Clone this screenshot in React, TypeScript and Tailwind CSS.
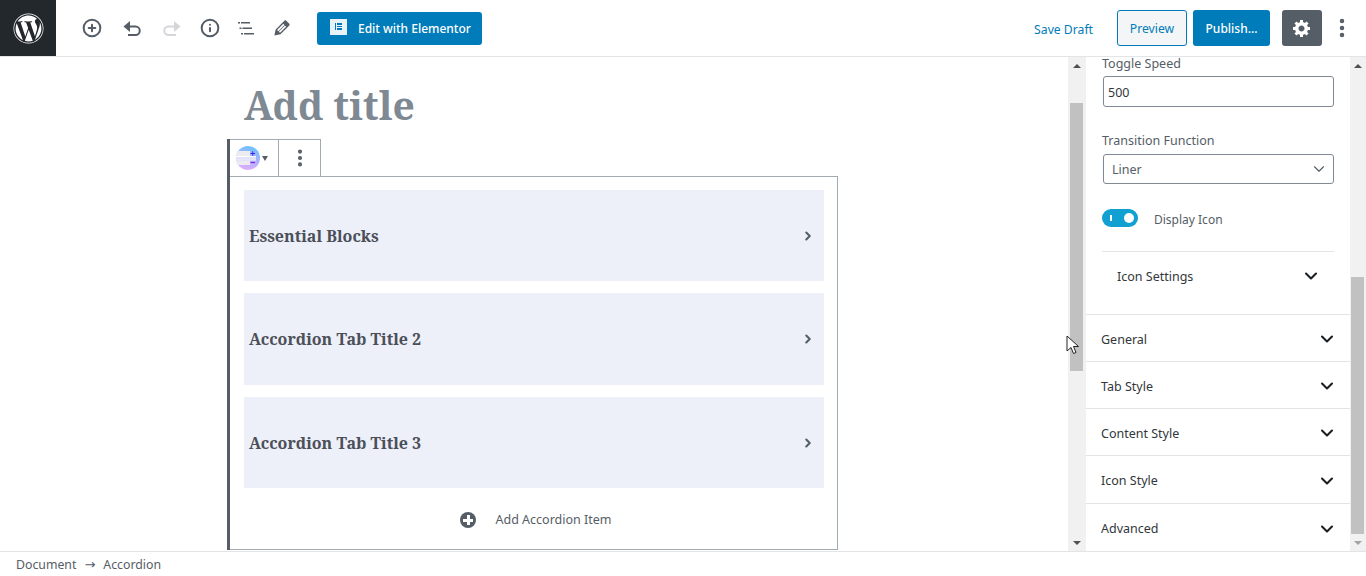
import { ChevronDown, ChevronRight, Info, MoreVertical, PlusCircle } from 'lucide-react'
import { FaWordpress } from 'react-icons/fa'

const sans = "font-['Noto_Sans','Open_Sans',sans-serif]"
const serif = "font-['Noto_Serif','DejaVu_Serif',serif]"

function ListIcon() {
  return (
    <svg viewBox="0 0 16 13" className="w-[16px] h-[13px]" fill="#555d66">
      <rect x="0" y="0" width="2" height="1.500" />
      <rect x="3" y="0" width="9" height="1.500" />
      <rect x="1.500" y="5.500" width="2" height="1.500" />
      <rect x="4.500" y="5.500" width="9.500" height="1.500" />
      <rect x="3" y="11" width="2" height="1.500" />
      <rect x="6" y="11" width="10" height="1.500" />
    </svg>
  )
}

function UndoIcon({ className }: { className?: string }) {
  return (
    <svg viewBox="0 0 18 17" className={`w-[18px] h-[17px] ${className ?? ''}`} fill="none" stroke="currentColor">
      <path d="M0.500 6.500L7 1V12z" fill="currentColor" stroke="none" />
      <path d="M6 6.500H12.500a4.250 4.250 0 0 1 0 8.500H5" strokeWidth="2" />
    </svg>
  )
}

function PencilIcon() {
  return (
    <svg viewBox="0 0 20 20" className="w-[22px] h-[22px]" fill="currentColor">
      <path d="M13.890 3.390l2.710 2.720c.46.46.42 1.240.03 1.640l-8.010 8.020-5.560 1.160 1.160-5.580s7.600-7.630 7.990-8.030c.39-.39 1.220-.39 1.680.07zm-2.730 2.790l-5.590 5.610 1.110 1.110 5.540-5.650zm-2.970 8.230l5.580-5.600-1.070-1.080-5.590 5.600z" />
    </svg>
  )
}

function GearIcon() {
  return (
    <svg viewBox="0 0 20 20" className="w-[20px] h-[20px]" fill="#fff">
      <path d="M18 12h-2.180c-.17.7-.44 1.350-.81 1.930l1.540 1.540-2.100 2.100-1.540-1.540c-.58.36-1.230.63-1.910.79V19H8v-2.180c-.68-.16-1.330-.43-1.910-.79l-1.540 1.540-2.120-2.120 1.540-1.540c-.36-.58-.63-1.230-.79-1.910H1V9.030h2.170c.16-.7.440-1.360.810-1.940L2.430 5.550l2.120-2.120 1.540 1.540c.58-.37 1.240-.64 1.940-.81V2h3v2.180c.68.16 1.330.43 1.910.79l1.540-1.540 2.120 2.120-1.540 1.540c.36.59.64 1.240.8 1.940H18V12zm-8.500 1.500c1.660 0 3-1.340 3-3s-1.340-3-3-3-3 1.340-3 3 1.340 3 3 3z" />
    </svg>
  )
}

function BlockIcon() {
  return (
    <svg viewBox="0 0 24 24" className="w-[24px] h-[24px]">
      <defs>
        <linearGradient id="blk" x1="0.7" y1="0" x2="0.4" y2="1">
          <stop offset="0" stopColor="#66c6ff" />
          <stop offset="0.5" stopColor="#a9b0fc" />
          <stop offset="1" stopColor="#e0aefc" />
        </linearGradient>
        <clipPath id="blkc">
          <circle cx="12" cy="12" r="12" />
        </clipPath>
      </defs>
      <circle cx="12" cy="12" r="12" fill="url(#blk)" />
      <g clipPath="url(#blkc)">
        <rect x="0" y="5" width="14" height="5" fill="#ececf0" />
        <rect x="0" y="10" width="20" height="1" fill="#fff" />
        <rect x="0" y="11" width="20" height="2.500" fill="#e2e2f6" />
        <rect x="0" y="13.500" width="20" height="1" fill="#fff" />
        <rect x="0" y="14.500" width="14" height="4.500" fill="#ececf0" />
      </g>
      <path d="M14.500 7.500h4.500M16.750 5.250v4.500" stroke="#4b22e0" strokeWidth="1" />
      <path d="M14.500 16.500h4.500" stroke="#8a22e0" strokeWidth="1.200" />
    </svg>
  )
}

function ElementorIcon() {
  return (
    <div className="w-[17px] h-[16px] bg-[#e8f2f8] flex items-center justify-center gap-[1px] mb-[3px]">
      <div className="w-[1.500px] h-[7px] bg-[#007cba]" />
      <div className="flex flex-col gap-[1px]">
        <div className="w-[5px] h-[1.500px] bg-[#007cba]" />
        <div className="w-[5px] h-[1.500px] bg-[#007cba]" />
        <div className="w-[5px] h-[1.500px] bg-[#007cba]" />
      </div>
    </div>
  )
}

function TopBar() {
  return (
    <div className="h-[57px] shrink-0 flex items-center border-b border-[#e2e4e7] bg-white">
      <div className="w-[56px] h-[56px] bg-[#23282d] flex items-center justify-center">
        <FaWordpress size={31} color="#fff" />
      </div>
      <div className="flex items-center ml-[26px] text-[#555d66]">
        <PlusCircle size={20} strokeWidth={2.400} />
        <UndoIcon className="ml-[21px]" />
        <UndoIcon className="ml-[22px] scale-x-[-1] text-[#d4d6d9]" />
        <Info size={20} strokeWidth={2.400} className="ml-[19px]" />
        <div className="ml-[18px]"><ListIcon /></div>
        <div className="ml-[17px]"><PencilIcon /></div>
      </div>
      <div className="ml-[24px] w-[165px] h-[33px] rounded-[3px] bg-[#007cba] flex items-center pl-[13px] gap-[11px] text-white text-[12px] font-medium">
        <ElementorIcon />
        <span className="pt-[2px]">Edit with Elementor</span>
      </div>
      <div className="ml-auto flex items-center">
        <span className="text-[#007cba] text-[12.200px] mr-[24px] mt-[4px]">Save Draft</span>
        <div className="w-[70px] h-[36px] rounded-[3px] border border-[#007cba] bg-[#f3f5f6] text-[#007cba] text-[12.200px] pt-[2px] flex items-center justify-center mr-[6px]">Preview</div>
        <div className="w-[77px] h-[36px] rounded-[3px] bg-[#007cba] text-white text-[12px] font-medium pt-[2px] flex items-center justify-center mr-[12px]">Publish...</div>
        <div className="w-[40px] h-[36px] rounded-[3px] bg-[#555d66] flex items-center justify-center">
          <GearIcon />
        </div>
        <MoreVertical size={24} strokeWidth={2.500} className="text-[#555d66] ml-[8px] mr-[12px]" />
      </div>
    </div>
  )
}

function AccordionTab({ title, height }: { title: string; height: string }) {
  return (
    <div className={`${height} bg-[#edf0f8] flex items-center pl-[5px] pr-[9px] text-[#4b4f58]`}>
      <span className={`${serif} text-[16px] font-bold flex-1 pt-[1px]`}>{title}</span>
      <ChevronRight size={14} strokeWidth={3.500} className="text-[#555d66]" />
    </div>
  )
}

function Scrollbar({ width, top, height, dim }: { width: string; top: string; height: string; dim?: boolean }) {
  return (
    <div className={`${width} shrink-0 bg-[#f1f1f1] flex flex-col items-start`}>
      <div className="w-[13px] h-[17px] shrink-0 flex items-center justify-center">
        <div className="w-0 h-0 border-x-[4px] border-x-transparent border-b-[4px] border-b-[#505050]" />
      </div>
      <div className={`${top} ${height} w-[13px] bg-[#c1c1c1] shrink-0`} />
      <div className="w-[13px] mt-auto h-[17px] shrink-0 flex items-center justify-center">
        <div className={`w-0 h-0 border-x-[4px] border-x-transparent border-t-[4px] ${dim ? 'border-t-[#a3a3a3]' : 'border-t-[#505050]'}`} />
      </div>
    </div>
  )
}

function Editor() {
  return (
    <div className="flex-1 min-w-0 bg-white overflow-hidden pl-[227px]">
      <h1 className={`${serif} pl-[17px] pt-[23px] h-[82px] text-[#7e8993] text-[39px] leading-[50px] font-bold`}>Add title</h1>
      <div className="w-[611px] border-l-[3px] border-[#555d66]">
        <div className="w-[91px] h-[37px] border-t border-r border-[#a2aab2] flex bg-white">
          <div className="w-[49px] border-r border-[#a2aab2] flex items-center pl-[6px] gap-[2px]">
            <BlockIcon />
            <div className="w-0 h-0 border-x-[3.500px] border-x-transparent border-t-[5px] border-t-[#555d66]" />
          </div>
          <div className="flex-1 flex items-center justify-center">
            <MoreVertical size={22} strokeWidth={2.500} className="text-[#555d66]" />
          </div>
        </div>
        <div className="h-[374px] border border-l-0 border-[#a2aab2] pl-[14px] pr-[13px] pt-[13px] flex flex-col">
          <div className="flex flex-col gap-[12px]">
            <AccordionTab title="Essential Blocks" height="h-[91px]" />
            <AccordionTab title="Accordion Tab Title 2" height="h-[92px] pb-[1px]" />
            <AccordionTab title="Accordion Tab Title 3" height="h-[91px]" />
          </div>
          <div className="flex items-center justify-center gap-[19px] mt-[23px] pl-[4px] text-[#555d66] text-[12.500px]">
            <div className="w-[16px] h-[16px] rounded-full bg-[#555d66] flex items-center justify-center relative">
              <div className="w-[10px] h-[3px] bg-white" />
              <div className="w-[3px] h-[10px] bg-white absolute" />
            </div>
            <span>Add Accordion Item</span>
          </div>
        </div>
      </div>
    </div>
  )
}

function SidebarSection({ title, height }: { title: string; height: string }) {
  return (
    <div className={`${height} shrink-0 border-t border-[#e2e4e7] flex items-center pl-[15px] pr-[13px] pt-[4px] text-[#32373c] text-[12.500px]`}>
      <span className="flex-1">{title}</span>
      <ChevronDown size={20} strokeWidth={2.500} className="text-[#191e23] mt-[-2px]" />
    </div>
  )
}

function Sidebar() {
  return (
    <div className="w-[264px] shrink-0 bg-white flex flex-col">
      <div className="h-[257px] shrink-0 px-[16px]">
        <div className="text-[#555d66] text-[12.500px] leading-[14px]">Toggle Speed</div>
        <div className="ml-[1px] mt-[5px] h-[31px] w-[231px] border border-[#7e8993] rounded-[3px] flex items-center pl-[4px] pt-[3px] text-[#32373c] text-[12.500px]">500</div>
        <div className="mt-[27px] text-[#555d66] text-[12.500px] leading-[14px]">Transition Function</div>
        <div className="ml-[1px] mt-[6px] h-[30px] w-[231px] border border-[#7e8993] rounded-[3px] flex items-center pl-[8px] pr-[5px] text-[#555d66] text-[12.500px]">
          <span className="flex-1 pt-[2px]">Liner</span>
          <ChevronDown size={18} strokeWidth={1.500} className="text-[#555d66]" />
        </div>
        <div className="mt-[25px] h-[18px] flex items-center">
          <div className="w-[36px] h-[18px] rounded-full bg-[#11a0d2] flex items-center justify-between pl-[8px] pr-[4px]">
            <div className="w-[2px] h-[6px] bg-white" />
            <div className="w-[10px] h-[10px] rounded-full bg-white" />
          </div>
          <span className="ml-[16px] mt-[4px] text-[#555d66] text-[12px]">Display Icon</span>
        </div>
        <div className="mt-[24px] w-[232px] h-[63px] border-t border-[#e2e4e7] flex items-center pl-[15px] pr-[13px] text-[#32373c] text-[12.500px]">
          <span className="flex-1 mt-[-12px]">Icon Settings</span>
          <ChevronDown size={20} strokeWidth={2.500} className="text-[#191e23] mt-[-14px]" />
        </div>
      </div>
      <SidebarSection title="General" height="h-[47px]" />
      <SidebarSection title="Tab Style" height="h-[47px]" />
      <SidebarSection title="Content Style" height="h-[47px]" />
      <SidebarSection title="Icon Style" height="h-[48px]" />
      <SidebarSection title="Advanced" height="h-[48px]" />
    </div>
  )
}

function Cursor() {
  return (
    <svg viewBox="0 0 13 20" className="absolute left-[1066px] top-[335px] w-[13px] h-[20px]">
      <path d="M1 1v15l4-3.500 2.500 6 2.500-1-2.500-6h5z" fill="#fff" stroke="#222" strokeWidth="1" />
    </svg>
  )
}

export default function App() {
  return (
    <div className={`${sans} relative w-[1366px] h-[576px] overflow-hidden flex flex-col bg-white`}>
      <TopBar />
      <div className="flex-1 min-h-0 flex">
        <Editor />
        <div className="w-[18px] shrink-0 pl-[2px] bg-[#f1f1f1] flex">
          <Scrollbar width="w-[16px]" top="mt-[29px]" height="h-[268px]" />
        </div>
        <Sidebar />
        <div className="w-[16px] shrink-0 pl-[1px] bg-[#f1f1f1] flex">
          <Scrollbar width="w-[15px]" top="mt-[203px]" height="h-[257px]" dim />
        </div>
      </div>
      <div className="h-[25px] shrink-0 border-t border-[#e2e4e7] bg-white flex items-center pl-[16px] pt-[2px] text-[#555d66] text-[12.300px]">
        Document<span className="mx-[8px] text-[13px] font-['DejaVu_Sans',sans-serif]">→</span>Accordion
      </div>
      <Cursor />
    </div>
  )
}
